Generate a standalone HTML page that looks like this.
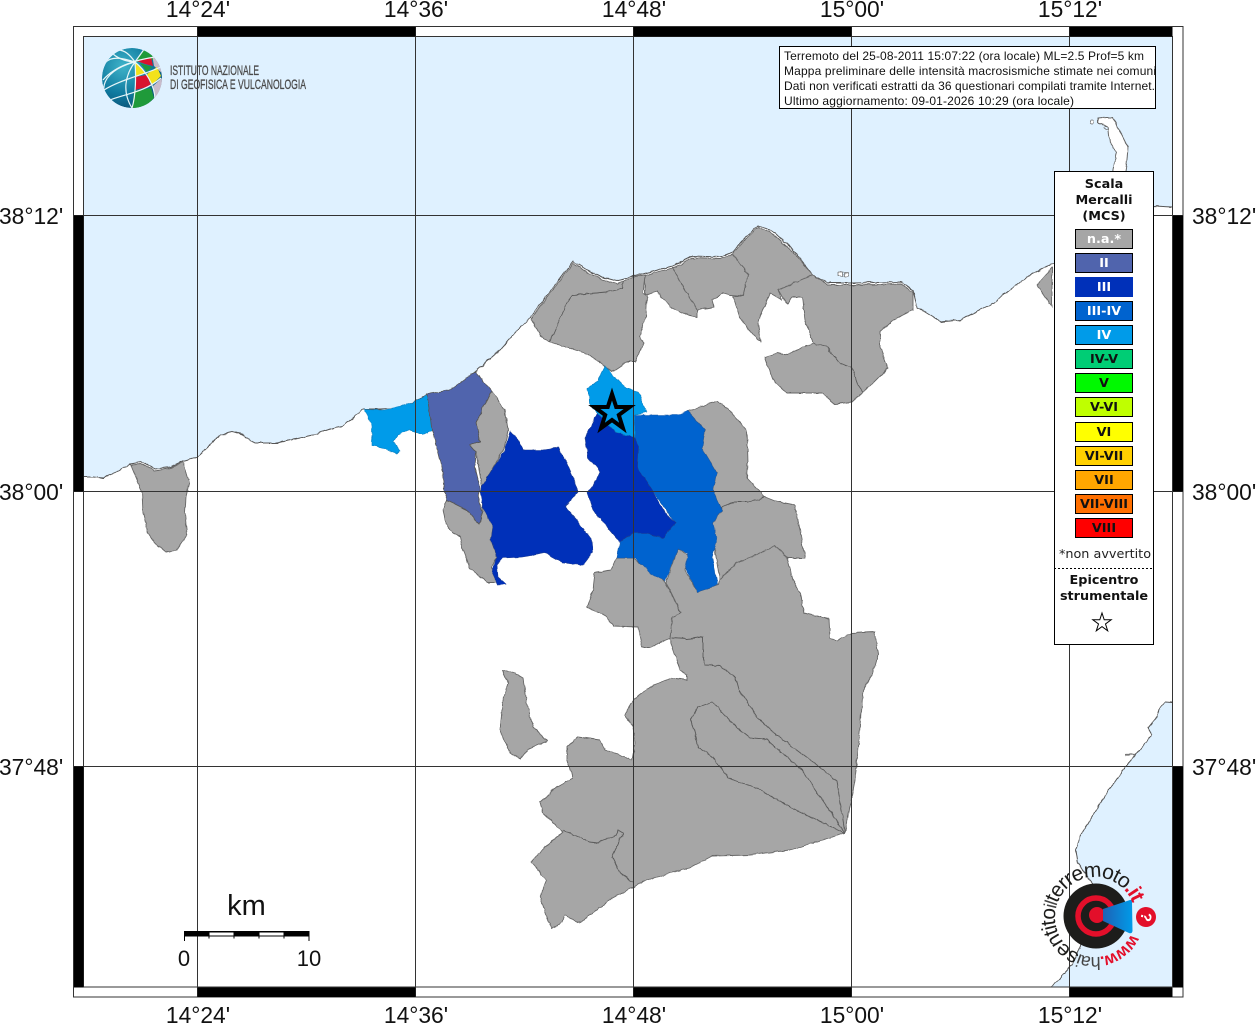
<!DOCTYPE html>
<html><head><meta charset="utf-8"><style>
html,body{margin:0;padding:0;background:#fff;width:1256px;height:1024px;overflow:hidden}
svg{display:block}
.lab{font-family:"Liberation Sans",sans-serif;font-size:22.8px;fill:#111}
.info{font-family:"Liberation Sans",sans-serif;font-size:12px;fill:#111}
.lg{font-family:"DejaVu Sans",sans-serif;font-size:12.8px;font-weight:bold;text-anchor:middle;fill:#111}
.g{fill:#a6a6a6;stroke:#666;stroke-width:.9;stroke-linejoin:round}
.l{fill:none;stroke:#595959;stroke-width:.9;stroke-linejoin:round}
.sw{stroke:#000;stroke-width:1}
</style></head><body>
<svg width="1256" height="1024" viewBox="0 0 1256 1024" xmlns="http://www.w3.org/2000/svg">
<defs>
<radialGradient id="gb" cx=".35" cy=".3" r=".85"><stop offset="0" stop-color="#3fb3c9"/><stop offset=".55" stop-color="#0f7a9f"/><stop offset="1" stop-color="#0b4468"/></radialGradient>
<linearGradient id="cone" x1="0" y1="0" x2="1" y2="0"><stop offset="0" stop-color="#1d62b5"/><stop offset="1" stop-color="#009be9"/></linearGradient>
<clipPath id="gc"><circle cx="132" cy="78" r="30"/></clipPath>
<clipPath id="boxc"><rect x="780" y="47" width="375.5" height="61"/></clipPath>
<clipPath id="mapc"><rect x="83" y="36" width="1090" height="951"/></clipPath>
<filter id="rough" filterUnits="userSpaceOnUse" x="0" y="0" width="1256" height="1024" color-interpolation-filters="sRGB">
<feTurbulence type="fractalNoise" baseFrequency=".14" numOctaves="2" seed="4" result="n"/>
<feDisplacementMap in="SourceGraphic" in2="n" scale="3.2" xChannelSelector="R" yChannelSelector="G"/>
<feGaussianBlur stdDeviation=".35"/>
</filter>
<path id="arc" d="M1131.25 933.9 A40 40 0 1 1 1133.6 906.6"/>
</defs>

<rect x="83" y="36" width="1090" height="951" fill="#fff"/>
<g clip-path="url(#mapc)"><g filter="url(#rough)">
<!-- sea -->
<path fill="#dff1ff" stroke="#555" stroke-width="1" stroke-linejoin="round" d="M70 477 L93 477 103 478 117 472 130 464 142 462 155 469 170 467 183 461 197 457 207 448 220 435 233 432 243 435 255 443 277 443 300 438 313 435 333 428 343 426 353 418 363 409 380 409 400 408 413 403 427 394 448 392 463 382 475 372 500 350 520 327 530 318 573 261 587 270 602 277 617 281 635 276 673 266 693 256 720 257 733 252 745 238 758 225 775 233 795 252 813 275 827 283 853 283 902 282 913 290 917 307 933 317 940 322 960 320 990 305 1030 275 1052 264 1100 232 1154 206 1190 208 L1190 20 70 20Z"/>
<path fill="#dff1ff" stroke="#555" stroke-width="1" stroke-linejoin="round" d="M1190 704 L1165 702 1160 708 1157 717 1148 728 1152 735 1140 750 1125 767 1107 793 1090 820 1080 837 1076 850 1078 863 1092 883 1094 900 1085 935 1072 965 1040 1000 L1190 1000Z"/>
<path fill="none" stroke="#777" stroke-width="1.3" d="M1125 755H1135"/>
<!-- north island -->
<path fill="#fff" stroke="#666" stroke-width="1" d="M1098 118 L1106 117 1113 117 1117 127 1122 135 1128 147 1127 160 1125 175 1112 175 1115 160 1117 153 1110 143 1108 127 1098 123Z"/>
<circle cx="1092" cy="122" r="2" fill="#fff" stroke="#666" stroke-width=".8"/>
<ellipse cx="1106" cy="128" rx="2.5" ry="1.4" fill="#dff1ff" stroke="#666" stroke-width=".7"/>
<rect x="838.5" y="272" width="4" height="4" fill="#fff" stroke="#666" stroke-width=".7"/><rect x="844" y="272" width="4" height="4" fill="#fff" stroke="#666" stroke-width=".7"/>

<!-- grey regions north -->
<path class="g" d="M531 319 573 263 587 272 602 279 617 284 635 277 645 275 643 293 647 297 646 317 639 337 644 343 635 362 627 362 612 372 603 365 588 354 550 342 540 335Z"/>
<path class="g" d="M645 275 673 268 680 282 697 310 697 317 688 315 670 307 657 291 645 295Z"/>
<path class="g" d="M673 268 693 258 720 259 733 254 748 275 743 296 730 295 723 293 712 300 714 307 697 310 680 282Z"/>
<path class="g" d="M733 254 745 240 758 227 774 235 795 254 813 275 778 290 782 300 770 293 758 323 761 342 753 335 740 318 733 296 743 296 748 275Z"/>
<path class="g" d="M813 275 827 285 853 285 902 284 913 292 913 310 893 320 880 332 880 347 888 368 873 383 863 392 852 402 835 404 822 393 787 393 773 380 765 357 777 353 787 355 797 350 813 343 805 320 802 297 792 297 787 303 778 290Z"/>
<path class="l" d="M550 342 567 303 573 295 607 292 622 288 623 282"/>
<path class="l" d="M813 343 827 347 840 363 852 368 858 385 863 392"/>
<path class="g" d="M1052 268 1037 285 1052 307Z"/>
<!-- west grey -->
<path class="g" d="M131 465 142 464 155 471 170 468 183 462 189 483 186 497 185 513 187 535 177 550 166 552 155 543 148 533 143 513 142 492Z"/>
<!-- grey near II -->
<path class="g" d="M492 391 505 410 508 430 505 447 490 473 482 487 476 452 470 445 480 442 476 422 482 413 483 407Z"/>
<path class="g" d="M447 500 467 510 479 524 483 513 482 497 493 527 491 540 497 557 492 567 497 582 488 582 478 575 470 568 463 550 460 537 447 527 443 510Z"/>
<!-- grey east of III-IV -->
<path class="g" d="M688 411 717 401 727 408 747 430 748 463 747 478 765 497 775 501 795 505 800 530 805 558 787 558 775 545 757 555 737 562 720 580 713 540 713 523 722 510 713 490 717 473 702 448 705 430Z"/>
<path class="l" d="M720 508 735 502 752 502 765 497"/>
<!-- big south regions -->
<path class="g" d="M617 558 633 558 665 582 681 613 672 618 672 638 650 647 642 647 638 627 614 626 605 615 587 607 593 590 595 573 610 570Z"/>
<path class="g" d="M720 580 737 562 757 555 775 545 787 558 793 580 800 593 804 613 829 619 830 638 837 640 852 633 875 632 878 655 873 673 863 690 860 733 855 780 845 833 790 850 750 855 712 856 690 868 670 873 647 880 632 888 613 898 597 910 580 923 565 915 562 922 552 929 548 920 540 897 547 880 531 862 540 852 563 832 543 813 540 802 557 787 573 778 567 758 567 747 578 737 600 740 605 750 632 760 635 743 633 727 624 715 633 700 653 685 673 678 687 680 687 675 680 670 670 640 672 618 681 613 666 582 678 549 689 555 685 570 697 592 719 585Z"/>
<path class="l" d="M672 638 687 639 703 637 703 657 705 665 720 666 735 677 738 688 757 717 773 732 820 767 837 781 845 833"/>
<path class="l" d="M845 833 802 770 767 740 750 738 740 730 727 718 712 702 698 707 691 720 698 747 713 757 728 778 757 788 790 807 845 833"/>
<path class="l" d="M563 830 590 842 597 843 617 835 618 830 623 833 612 857 620 873 633 882"/>
<path class="g" d="M502 670 513 672 523 678 527 703 533 727 547 741 527 750 520 759 510 753 500 730 503 700 508 683Z"/>

<!-- intensity regions -->
<path fill="#009be9" stroke="#0a7fc0" stroke-width=".6" d="M365 409 385 410 413 403 427 395 432 430 423 434 410 430 398 435 393 442 400 451 397 454 387 449 372 446 372 427Z"/>
<path fill="#5064ad" stroke="#555" stroke-width=".8" d="M427 394 450 390 475 372 492 391 483 407 482 413 476 422 480 442 470 445 476 452 475 467 480 487 478 497 483 513 479 524 467 510 447 500 444 490 442 467 437 447 432 430Z"/>
<path fill="#0030b9" stroke="#1a3a90" stroke-width=".6" d="M510 431 517 438 523 450 543 450 558 448 567 463 573 477 578 492 565 507 577 520 592 540 593 552 583 565 563 563 545 553 523 557 503 558 497 565 498 577 506 584 498 585 492 572 497 557 491 540 493 527 483 507 480 490 490 473 505 450Z"/>
<path fill="#0063cf" stroke="#1a5aa8" stroke-width=".6" d="M634 415 650 415 678 415 688 411 705 430 702 448 717 473 713 490 722 510 713 523 717 540 712 557 718 585 697 592 685 567 688 553 678 549 665 581 650 573 635 558 617 558 620 542 633 533 675 523 652 490 637 467 638 447 635 437Z"/>
<path fill="#0030b9" stroke="#1a3a90" stroke-width=".6" d="M597 413 585 438 588 457 600 472 595 483 587 493 593 510 603 522 620 542 633 533 647 533 663 538 675 523 663 510 652 490 637 467 638 447 635 437 617 433Z"/>
<path fill="#009be9" stroke="#0a7fc0" stroke-width=".6" d="M605 366 615 378 627 388 638 392 647 412 634 415 635 437 617 433 597 413 589 403 588 388 598 380Z"/>
</g></g>

<!-- grid -->
<g stroke="#333" stroke-width="1" fill="none">
<path d="M197.5 26.5V997M415.5 26.5V997M633.5 26.5V997M851.5 26.5V997M1069.5 26.5V997"/>
<path d="M73.5 215.5H1183M73.5 491.5H1183M73.5 766.5H1183"/>
</g>

<!-- frame -->
<rect x="73.5" y="26.5" width="1109.5" height="970.5" fill="none" stroke="#333"/>
<rect x="83.5" y="36.5" width="1089" height="950.5" fill="none" stroke="#333"/>
<g fill="#000">
<rect x="197.5" y="27" width="218" height="9.5"/><rect x="633.5" y="27" width="218" height="9.5"/><rect x="1069.5" y="27" width="103" height="9.5"/>
<rect x="197.5" y="987.5" width="218" height="9.5"/><rect x="633.5" y="987.5" width="218" height="9.5"/><rect x="1069.5" y="987.5" width="103" height="9.5"/>
<rect x="74" y="215.5" width="9.5" height="276"/><rect x="74" y="766.5" width="9.5" height="221"/>
<rect x="1173" y="215.5" width="10" height="276"/><rect x="1173" y="766.5" width="10" height="221"/>
</g>

<!-- labels -->
<g class="lab" text-anchor="middle">
<text x="198" y="17">14°24'</text><text x="416" y="17">14°36'</text><text x="634" y="17">14°48'</text><text x="852" y="17">15°00'</text><text x="1070" y="17">15°12'</text>
<text x="198" y="1023">14°24'</text><text x="416" y="1023">14°36'</text><text x="634" y="1023">14°48'</text><text x="852" y="1023">15°00'</text><text x="1070" y="1023">15°12'</text>
</g>
<g class="lab">
<text x="-1" y="224">38°12'</text><text x="-1" y="500">38°00'</text><text x="-1" y="775">37°48'</text>
<text x="1192" y="224">38°12'</text><text x="1192" y="500">38°00'</text><text x="1192" y="775">37°48'</text>
</g>

<!-- INGV logo -->
<g clip-path="url(#gc)">
<circle cx="132" cy="78" r="30" fill="url(#gb)"/>
<path fill="#1f9a3a" d="M136 62 145 48 158 58 152 60Z"/>
<path fill="#d9132e" d="M137 61 151 57 153 66 145 64Z"/>
<path fill="#c9bccb" d="M152 54 162 62 163 74 154 66Z"/>
<path fill="#f2e21c" d="M135 62 146 73 135 76Z"/>
<path fill="#1f9a3a" d="M140 63 152 67 147 72Z"/>
<path fill="#f2e21c" d="M147 74 157 67 161 76 152 85Z"/>
<path fill="#d9132e" d="M135 77 147 75 151 86 135 90Z"/>
<path fill="#c9bccb" d="M153 86 162 78 162 90 155 98Z"/>
<path fill="#1f9a3a" d="M134 91 151 88 154 98 146 106 132 110Z"/>
<path fill="#d9132e" d="M155 99 160 93 154 103Z"/>
<g fill="none" stroke="#e8f6f8" stroke-width="1.2">
<path d="M135 62 C125 75 122 92 132 108"/><path d="M135 62 C112 68 102 80 104 92"/><path d="M135 62 C122 58 112 56 106 62"/><path d="M135 62 C136 75 136 95 132 108"/>
<path d="M135 62 C145 70 155 85 155 100"/><path d="M135 62 L145 48"/><path d="M135 62 C130 55 125 50 118 50"/>
<path d="M103 80 C115 66 135 60 155 57"/><path d="M104 90 C120 80 140 76 161 67"/><path d="M110 100 C125 94 145 92 161 78"/><path d="M113 54 C120 60 130 62 135 62"/>
</g>
</g>
<g font-family="'Liberation Sans',sans-serif" font-size="14" fill="#4a4a4a" stroke="#4a4a4a" stroke-width=".3">
<text x="170" y="75" textLength="89" lengthAdjust="spacingAndGlyphs">ISTITUTO NAZIONALE</text>
<text x="170" y="89" textLength="136" lengthAdjust="spacingAndGlyphs">DI GEOFISICA E VULCANOLOGIA</text>
</g>

<!-- info box -->
<rect x="779.5" y="46.5" width="376" height="62" fill="#fff" stroke="#000"/>
<g class="info" clip-path="url(#boxc)">
<text x="784" y="60" textLength="360">Terremoto del 25-08-2011 15:07:22 (ora locale) ML=2.5 Prof=5 km</text>
<text x="784" y="75" textLength="372">Mappa preliminare delle intensità macrosismiche stimate nei comuni</text>
<text x="784" y="90" textLength="371">Dati non verificati estratti da 36 questionari compilati tramite Internet.</text>
<text x="784" y="105" textLength="290">Ultimo aggiornamento: 09-01-2026 10:29 (ora locale)</text>
</g>

<!-- legend -->
<rect x="1054.5" y="171.5" width="99" height="473" fill="#fff" stroke="#000"/>
<text class="lg" x="1104" y="188">Scala</text><text class="lg" x="1104" y="204">Mercalli</text><text class="lg" x="1104" y="220">(MCS)</text>
<g class="sw">
<rect x="1075.5" y="229.5" width="57" height="19" fill="#a6a6a6"/>
<rect x="1075.5" y="253.5" width="57" height="19" fill="#5064ad"/>
<rect x="1075" y="277" width="58" height="20" fill="#0030b9" stroke="none"/>
<rect x="1075.5" y="301.5" width="57" height="19" fill="#0063cf"/>
<rect x="1075.5" y="325.5" width="57" height="19" fill="#009be9"/>
<rect x="1075.5" y="349.5" width="57" height="19" fill="#00cd75"/>
<rect x="1075.5" y="373.5" width="57" height="19" fill="#00f900"/>
<rect x="1075.5" y="397.5" width="57" height="19" fill="#bfff00"/>
<rect x="1075.5" y="422.5" width="57" height="19" fill="#ffff00"/>
<rect x="1075.5" y="446.5" width="57" height="19" fill="#ffd000"/>
<rect x="1075.5" y="470.5" width="57" height="19" fill="#ffa600"/>
<rect x="1075.5" y="494.5" width="57" height="19" fill="#ff6f00"/>
<rect x="1075.5" y="518.5" width="57" height="19" fill="#ff0000"/>
</g>
<g class="lg">
<text x="1104" y="243" style="fill:#fff">n.a.*</text>
<text x="1104" y="267" style="fill:#fff">II</text>
<text x="1104" y="291" style="fill:#fff">III</text>
<text x="1104" y="315" style="fill:#fff">III-IV</text>
<text x="1104" y="339" style="fill:#fff">IV</text>
<text x="1104" y="363">IV-V</text>
<text x="1104" y="387">V</text>
<text x="1104" y="411">V-VI</text>
<text x="1104" y="436">VI</text>
<text x="1104" y="460">VI-VII</text>
<text x="1104" y="484">VII</text>
<text x="1104" y="508">VII-VIII</text>
<text x="1104" y="532">VIII</text>
</g>
<text x="1105" y="558" text-anchor="middle" font-family="'DejaVu Sans',sans-serif" font-size="12.8" fill="#222">*non avvertito</text>
<path d="M1054 568.5H1153" stroke="#000" stroke-width="1" stroke-dasharray="2 2"/>
<text class="lg" x="1104" y="584">Epicentro</text><text class="lg" x="1104" y="600">strumentale</text>
<polygon points="1102,613 1104.2,619.8 1111.2,619.8 1105.5,624 1107.7,630.8 1102,626.6 1096.3,630.8 1098.5,624 1092.8,619.8 1099.8,619.8" fill="#fff" stroke="#000" stroke-width="1"/>

<!-- epicentre star -->
<polygon points="612,394 616.2,407 629.7,407 618.8,415 622.9,428 612,420 601.1,428 605.2,415 594.3,407 607.8,407" fill="#009be9" stroke="#000" stroke-width="4"/>

<!-- scale -->
<g>
<rect x="184" y="931" width="125" height="5.5" fill="#000"/>
<rect x="209.5" y="932.5" width="24" height="3" fill="#fff"/><rect x="259.5" y="932.5" width="24" height="3" fill="#fff"/>
<path d="M184.5 931V941M309 931V941M209 936V938.5M234 936V938.5M259 936V938.5M284 936V938.5" stroke="#000" fill="none"/>
<g font-family="'Liberation Sans',sans-serif" fill="#111" text-anchor="middle">
<text x="246.5" y="915" font-size="29">km</text>
<text x="184" y="966" font-size="22">0</text>
<text x="309" y="966" font-size="22">10</text>
</g>
</g>

<!-- haisentito logo -->
<circle cx="1096" cy="916" r="32.5" fill="#1d1d1b"/>
<circle cx="1096" cy="916" r="18" fill="none" stroke="#e30f2a" stroke-width="5.5"/>
<circle cx="1097" cy="915" r="8" fill="#e30f2a"/>
<path d="M1103 909 L1130 900 Q1132 899.5 1132 902 L1132.5 931 Q1132 934 1129 933 L1103 921Z" fill="url(#cone)"/>
<circle cx="1146" cy="917" r="10" fill="#e30f2a"/>
<text x="1146" y="917" transform="rotate(100 1146 917)" text-anchor="middle" dy="5" font-family="'Liberation Sans',sans-serif" font-weight="bold" font-size="15" fill="#fff">?</text>
<text font-family="'Liberation Sans',sans-serif" font-size="21" fill="#1d1d1b" letter-spacing="-1"><textPath href="#arc"><tspan fill="#e30f2a" font-weight="bold" font-size="17">www.</tspan><tspan font-size="18" fill="#444">hai</tspan>sentito<tspan fill="#444" font-size="18">il</tspan>terremoto<tspan fill="#e30f2a" font-weight="bold">.it</tspan></textPath></text>
</svg>
</body></html>
